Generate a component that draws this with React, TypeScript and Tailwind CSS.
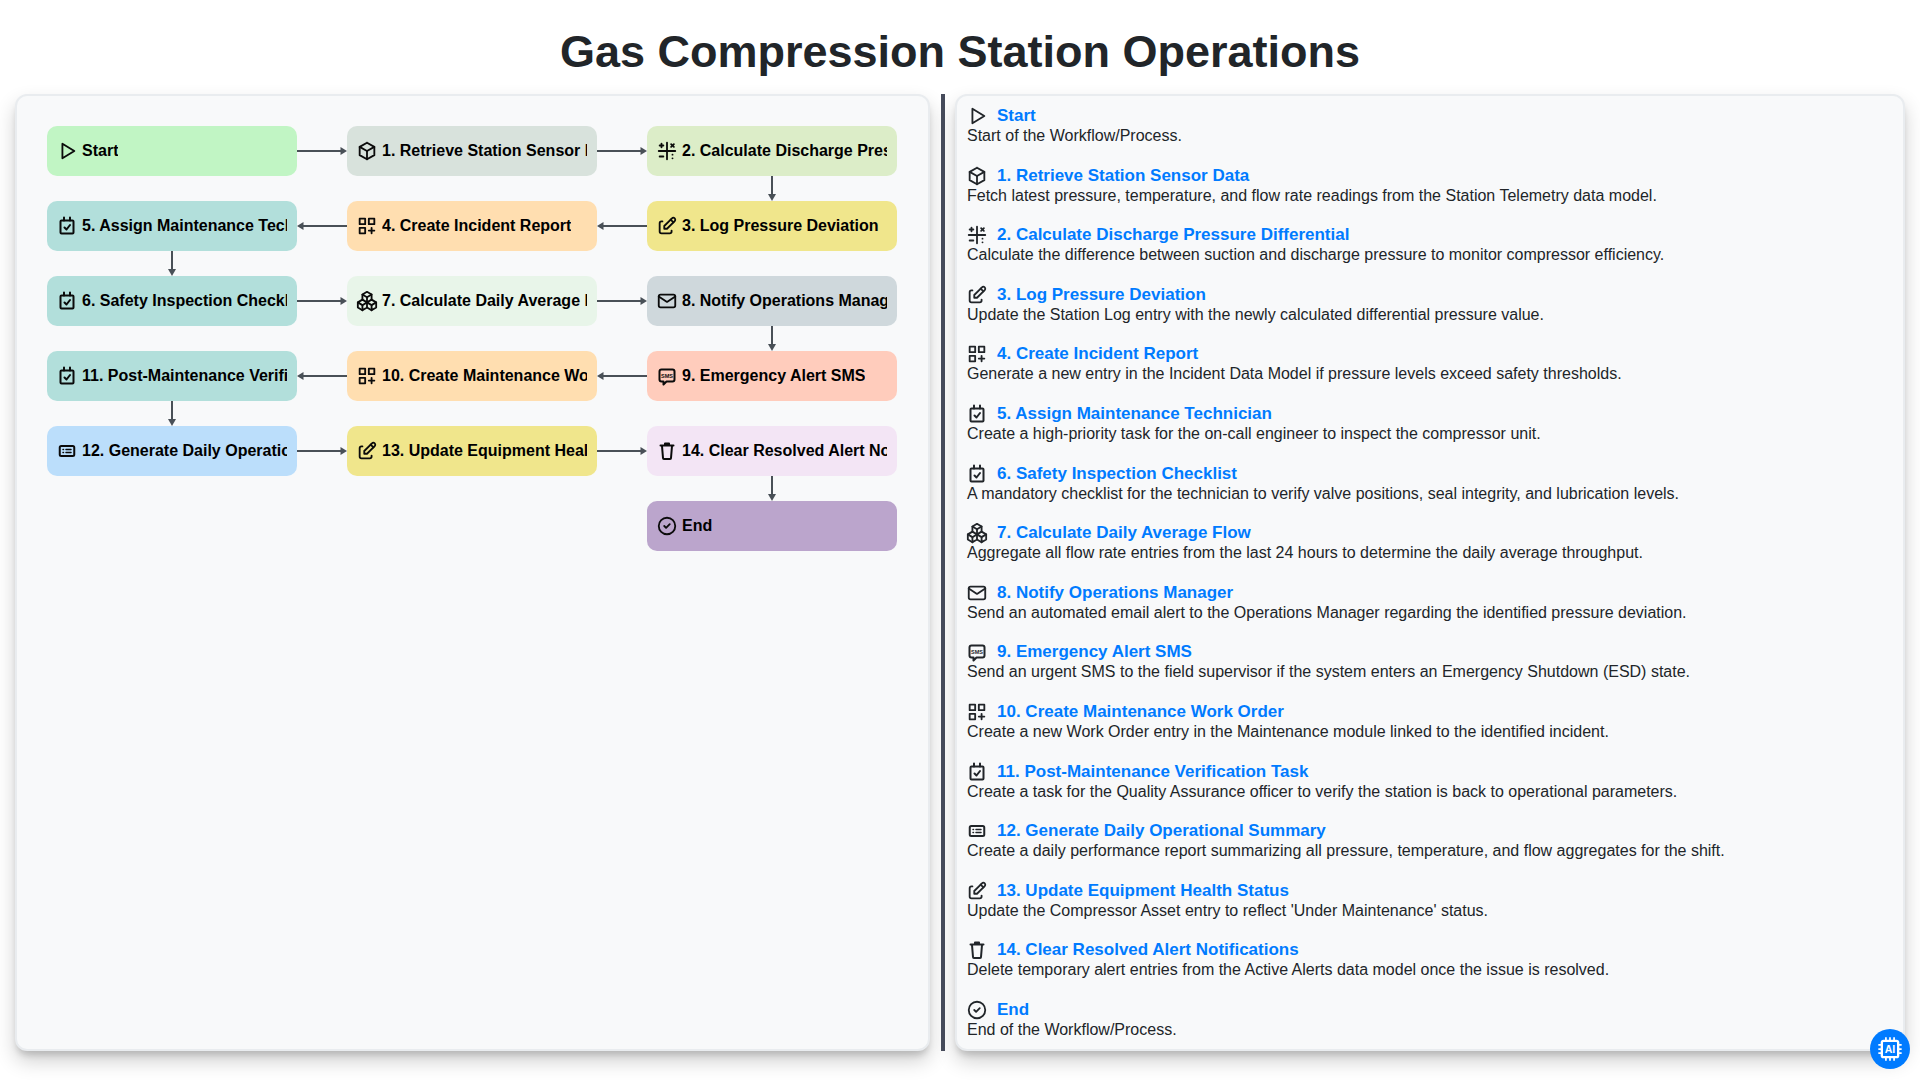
import type { ReactNode } from "react";
import {
  TbBox,
  TbCategoryPlus,
  TbCircleCheck,
  TbEdit,
  TbMail,
  TbMathSymbols,
  TbPackages,
  TbPlayerPlay,
} from "react-icons/tb";

type IconProps = { className?: string };

function CalendarTask({ className }: IconProps) {
  return (
    <svg viewBox="1 1 22 22" fill="none" stroke="currentColor" strokeWidth="2" strokeLinecap="round" strokeLinejoin="round" className={className}>
      <rect x="5.5" y="6.5" width="13" height="13" rx="1" />
      <path d="M9 3.5v3M15 3.5v3M9.5 13.5l2 2 3.5-4.5" />
    </svg>
  );
}

function SmsBubble({ className }: IconProps) {
  return (
    <svg viewBox="1 1 22 22" fill="none" stroke="currentColor" strokeWidth="2" strokeLinejoin="round" className={className}>
      <path d="M6.5 5.5h11a2 2 0 0 1 2 2v8a2 2 0 0 1-2 2h-6l-3 3v-3h-2a2 2 0 0 1-2-2v-8a2 2 0 0 1 2-2z" />
      <text x="12" y="13.5" textAnchor="middle" fontSize="5.5" fontWeight="700" stroke="none" fill="currentColor" fontFamily="'Liberation Sans', sans-serif">SMS</text>
    </svg>
  );
}

function ListCard({ className }: IconProps) {
  return (
    <svg viewBox="1 1 22 22" fill="none" stroke="currentColor" strokeWidth="2" strokeLinecap="round" className={className}>
      <rect x="4.75" y="7" width="14.5" height="10" rx="1.5" />
      <path d="M8 10.5h.5M8 13.5h.5M11 10.5h5M11 13.5h5" strokeWidth="1.5" />
    </svg>
  );
}

function TrashCan({ className }: IconProps) {
  return (
    <svg viewBox="1 1 22 22" fill="none" stroke="currentColor" strokeWidth="2" strokeLinecap="round" strokeLinejoin="round" className={className}>
      <path d="M5.5 6.5h13M7 7l1 12a1 1 0 0 0 1 1h6a1 1 0 0 0 1-1l1-12M10 6V4.5h4V6" />
    </svg>
  );
}

type Arrow = "right" | "left" | "down";

type Step = {
  title: string;
  text: string;
  Icon: (props: IconProps) => ReactNode;
  bg: string;
  arrow?: Arrow;
};

// listed in workflow order, the diagram below picks its own snake order
const steps: Step[] = [
  { title: "Start", text: "Start of the Workflow/Process.", Icon: TbPlayerPlay, bg: "bg-[#c1f5c4]", arrow: "right" },
  { title: "1. Retrieve Station Sensor Data", text: "Fetch latest pressure, temperature, and flow rate readings from the Station Telemetry data model.", Icon: TbBox, bg: "bg-[#d8e2dc]", arrow: "right" },
  { title: "2. Calculate Discharge Pressure Differential", text: "Calculate the difference between suction and discharge pressure to monitor compressor efficiency.", Icon: TbMathSymbols, bg: "bg-[#dcedc8]", arrow: "down" },
  { title: "3. Log Pressure Deviation", text: "Update the Station Log entry with the newly calculated differential pressure value.", Icon: TbEdit, bg: "bg-[#f0e68c]", arrow: "left" },
  { title: "4. Create Incident Report", text: "Generate a new entry in the Incident Data Model if pressure levels exceed safety thresholds.", Icon: TbCategoryPlus, bg: "bg-[#ffdeb0]", arrow: "left" },
  { title: "5. Assign Maintenance Technician", text: "Create a high-priority task for the on-call engineer to inspect the compressor unit.", Icon: CalendarTask, bg: "bg-[#b2dfdb]", arrow: "down" },
  { title: "6. Safety Inspection Checklist", text: "A mandatory checklist for the technician to verify valve positions, seal integrity, and lubrication levels.", Icon: CalendarTask, bg: "bg-[#b2dfdb]", arrow: "right" },
  { title: "7. Calculate Daily Average Flow", text: "Aggregate all flow rate entries from the last 24 hours to determine the daily average throughput.", Icon: TbPackages, bg: "bg-[#e8f5e9]", arrow: "right" },
  { title: "8. Notify Operations Manager", text: "Send an automated email alert to the Operations Manager regarding the identified pressure deviation.", Icon: TbMail, bg: "bg-[#cfd8dc]", arrow: "down" },
  { title: "9. Emergency Alert SMS", text: "Send an urgent SMS to the field supervisor if the system enters an Emergency Shutdown (ESD) state.", Icon: SmsBubble, bg: "bg-[#ffccbc]", arrow: "left" },
  { title: "10. Create Maintenance Work Order", text: "Create a new Work Order entry in the Maintenance module linked to the identified incident.", Icon: TbCategoryPlus, bg: "bg-[#ffdeb0]", arrow: "left" },
  { title: "11. Post-Maintenance Verification Task", text: "Create a task for the Quality Assurance officer to verify the station is back to operational parameters.", Icon: CalendarTask, bg: "bg-[#b2dfdb]", arrow: "down" },
  { title: "12. Generate Daily Operational Summary", text: "Create a daily performance report summarizing all pressure, temperature, and flow aggregates for the shift.", Icon: ListCard, bg: "bg-[#bbdefb]", arrow: "right" },
  { title: "13. Update Equipment Health Status", text: "Update the Compressor Asset entry to reflect 'Under Maintenance' status.", Icon: TbEdit, bg: "bg-[#f0e68c]", arrow: "right" },
  { title: "14. Clear Resolved Alert Notifications", text: "Delete temporary alert entries from the Active Alerts data model once the issue is resolved.", Icon: TrashCan, bg: "bg-[#f3e5f5]", arrow: "down" },
  { title: "End", text: "End of the Workflow/Process.", Icon: TbCircleCheck, bg: "bg-[#bba5cc]" },
];

// grid order of the cards, every second row runs right to left
const gridOrder = [0, 1, 2, 5, 4, 3, 6, 7, 8, 11, 10, 9, 12, 13, 14];

function Connector({ dir }: { dir: Arrow }) {
  if (dir === "down") {
    return (
      <svg viewBox="0 0 10 25" className="absolute left-1/2 top-full h-[25px] w-[10px] -translate-x-1/2 text-[#495057]">
        <path d="M5 0v19" stroke="currentColor" strokeWidth="2" />
        <path d="M1 18h8L5 25z" fill="currentColor" />
      </svg>
    );
  }
  if (dir === "left") {
    return (
      <svg viewBox="0 0 50 10" className="absolute right-full top-1/2 h-[10px] w-[50px] -translate-y-1/2 text-[#495057]">
        <path d="M6 5h44" stroke="currentColor" strokeWidth="2" />
        <path d="M6.5 1v8L0 5z" fill="currentColor" />
      </svg>
    );
  }
  return (
    <svg viewBox="0 0 50 10" className="absolute left-full top-1/2 h-[10px] w-[50px] -translate-y-1/2 text-[#495057]">
      <path d="M0 5h44" stroke="currentColor" strokeWidth="2" />
      <path d="M43.5 1v8L50 5z" fill="currentColor" />
    </svg>
  );
}

function FlowCard({ step }: { step: Step }) {
  const { Icon } = step;
  return (
    <div className={`relative flex h-[50px] items-center rounded-[10px] px-[10px] ${step.bg}`}>
      <Icon className="-ml-px mr-1 h-[22px] w-[22px] shrink-0 text-[#0b0b0b]" />
      <span className="overflow-hidden whitespace-nowrap text-base font-bold text-[#000]">{step.title}</span>
      {step.arrow && <Connector dir={step.arrow} />}
    </div>
  );
}

export default function App() {
  return (
    <div className="flex h-[1080px] flex-col overflow-hidden bg-white font-['Liberation_Sans',Arial,sans-serif] text-[#212529]">
      <h1 className="flex h-[94px] shrink-0 items-center justify-center pt-[10px] text-[45px] font-bold">
        Gas Compression Station Operations
      </h1>
      <div className="flex h-[957px] px-[15px]">
        <section className="w-[915px] shrink-0 rounded-xl border-2 border-[#e9ecef] bg-[#f8f9fa] p-[30px] shadow-[0_10px_20px_rgba(0,0,0,0.19),0_6px_6px_-2px_rgba(0,0,0,0.15)]">
          <div className="grid grid-cols-[repeat(3,250px)] gap-x-[50px] gap-y-[25px]">
            {gridOrder.map((i) => (
              <FlowCard key={steps[i].title} step={steps[i]} />
            ))}
            <div className="col-start-3">
              <FlowCard step={steps[15]} />
            </div>
          </div>
        </section>

        <div className="flex w-[25px] shrink-0 pl-[11px]">
          <div className="h-full w-1 bg-[#474c5c]" />
        </div>

        <section className="flex-1 rounded-xl border-2 border-[#e9ecef] bg-[#f8f9fa] pl-[10px] pt-[8px] shadow-[0_10px_20px_rgba(0,0,0,0.19),0_6px_6px_-2px_rgba(0,0,0,0.15)]">
          {steps.map((step) => {
            const { Icon } = step;
            return (
              <div key={step.title} className="h-[59.6px]">
                <div className="flex h-6 items-center">
                  <Icon className="-ml-px mr-[9px] h-[22px] w-[22px] shrink-0 text-[#212529]" />
                  <span className="text-[17px] font-bold leading-5 text-[#007bff]">{step.title}</span>
                </div>
                <p className="text-base leading-4">{step.text}</p>
              </div>
            );
          })}
        </section>
      </div>

      {/* AI helper button */}
      <button type="button" aria-label="AI assistant" className="absolute left-[1870px] top-[1029px] grid h-10 w-10 place-items-center rounded-full bg-[#007bff] text-white">
        <svg viewBox="0 0 24 24" fill="none" stroke="currentColor" strokeWidth="2" className="h-7 w-7">
          <rect x="5" y="5" width="14" height="14" rx="1.5" />
          <path d="M8.5 5V2M12 5V2M15.5 5V2M8.5 22v-3M12 22v-3M15.5 22v-3M5 8.5H2M5 12H2M5 15.5H2M22 8.5h-3M22 12h-3M22 15.5h-3" strokeWidth="1.5" />
          <text x="12" y="15.2" textAnchor="middle" fontSize="9" fontWeight="700" stroke="none" fill="currentColor" fontFamily="'Liberation Sans', sans-serif">AI</text>
        </svg>
      </button>
    </div>
  );
}
